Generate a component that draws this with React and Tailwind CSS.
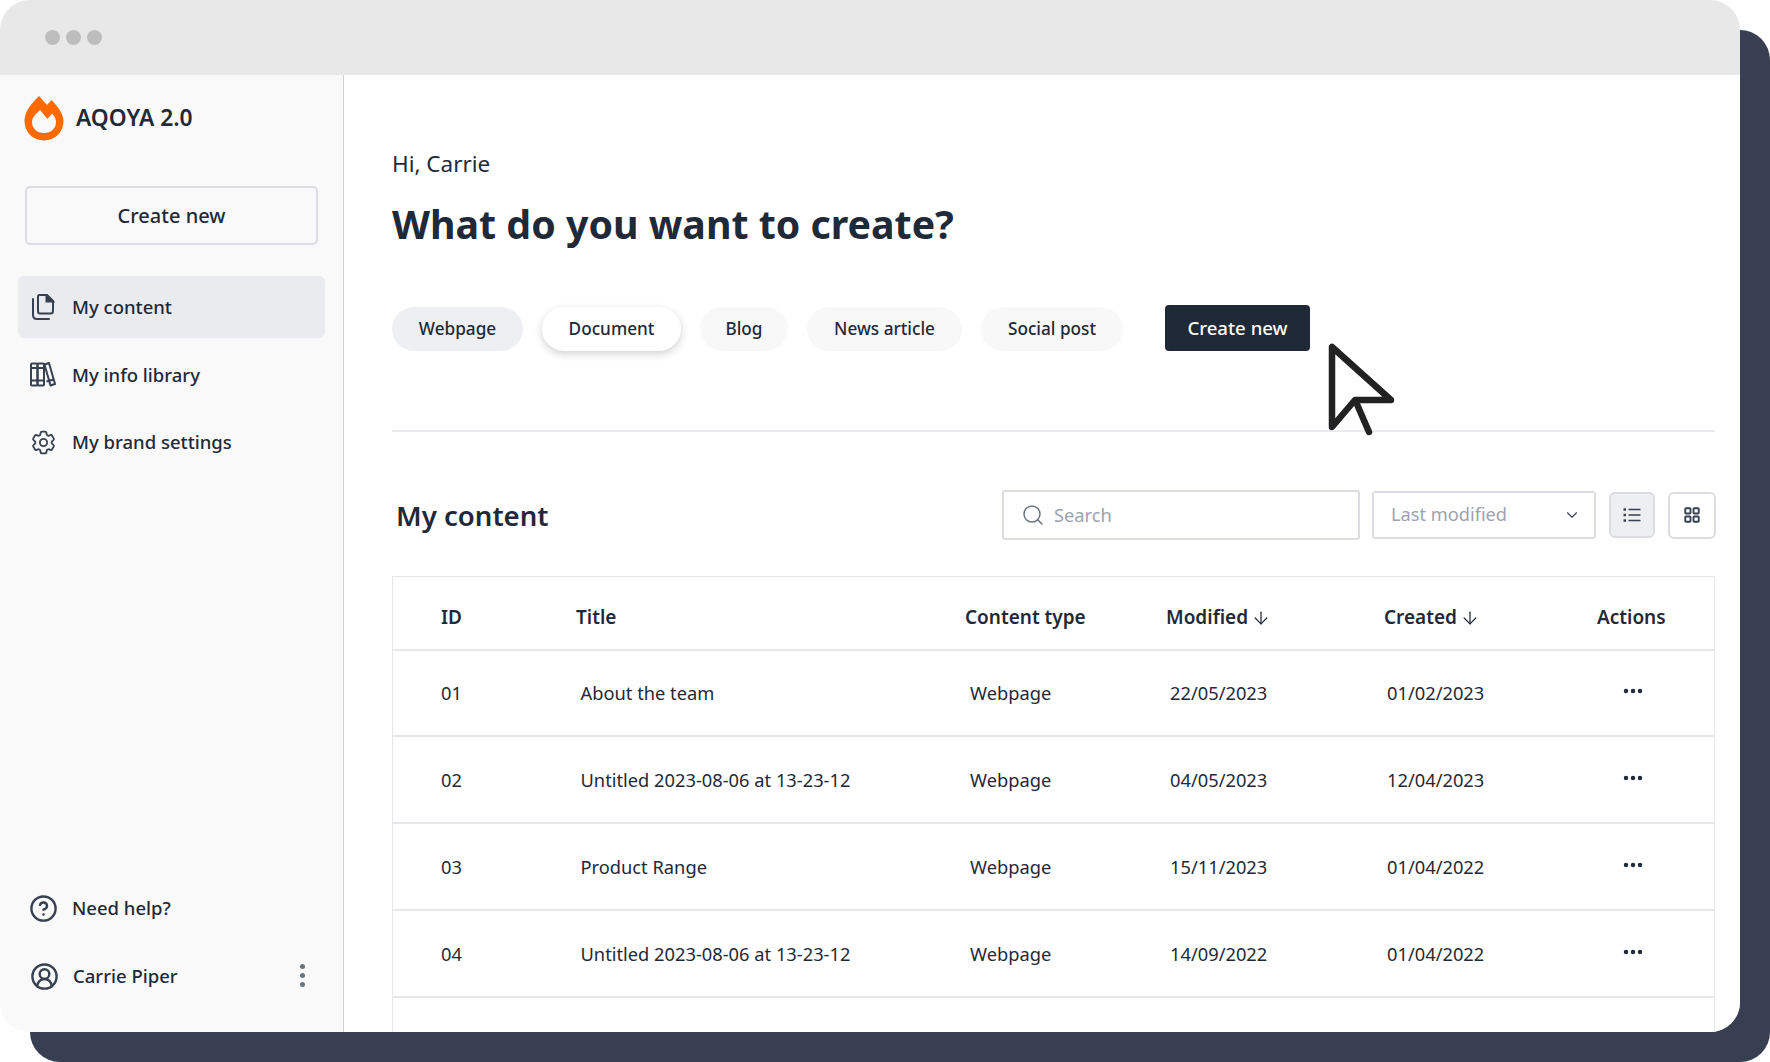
import { ArrowDown, ChevronDown, CircleHelp, CircleUserRound, LayoutGrid, MoreHorizontal, Search } from "lucide-react";
import { HiOutlineCog6Tooth } from "react-icons/hi2";

const rows = [
  { id: "01", title: "About the team", modified: "22/05/2023", created: "01/02/2023" },
  { id: "02", title: "Untitled 2023-08-06 at 13-23-12", modified: "04/05/2023", created: "12/04/2023" },
  { id: "03", title: "Product Range", modified: "15/11/2023", created: "01/04/2022" },
  { id: "04", title: "Untitled 2023-08-06 at 13-23-12", modified: "14/09/2022", created: "01/04/2022" },
];

function Logo() {
  return (
    <svg width="40" height="45" viewBox="0 0 40 45" className="shrink-0">
      <path
        fillRule="evenodd"
        fill="#ff6a00"
        d="M15 0 L23 9 L27.500 4 C33 10 39.500 17 39.500 25 C39.500 36 31 44.500 20 44.500 C9 44.500 0.500 36 0.500 25 C0.500 15 8 7 15 0 Z M16 14 C12 18 8 21 8 26 C8 32.500 13 37 20 37 C27 37 32 32.500 32 26 C32 23 30.500 20 28 17.500 L23.500 23 Z"
      />
    </svg>
  );
}

function CopyIcon() {
  return (
    <svg width="24" height="26" viewBox="0 0 24 26" fill="none" stroke="#374151" strokeWidth="2" className="shrink-0">
      <path d="M7 2.500 C7 1.800 7.500 1 8.500 1 H16 L22 7 V17 C22 18.500 21 19.500 19.500 19.500 H9 C7.800 19.500 7 18.500 7 17 Z" />
      <path d="M15.500 1 L22 7.500 H15.500 Z" fill="#374151" />
      <path d="M2 5 V21 C2 23.500 3.500 25 6 25 H18" strokeLinecap="round" />
    </svg>
  );
}

function LibraryIcon() {
  return (
    <svg width="26" height="25" viewBox="0 0 26 25" fill="none" stroke="#374151" strokeWidth="2" className="shrink-0">
      <rect x="1" y="1.500" width="6.500" height="22" rx="1" />
      <rect x="7.500" y="1.500" width="6.500" height="22" rx="1" />
      <path d="M14.500 2.500 L19 1 L25 22 L20.500 23.500 Z" strokeLinejoin="round" />
      <path d="M1 18.500 H14 M16.500 19.500 L23.500 17.500" />
      <path d="M1 6 H14" />
    </svg>
  );
}

function ListIcon() {
  return (
    <svg width="18" height="18" viewBox="0 0 18 18" fill="none" stroke="#374151" className="shrink-0">
      <path d="M5.500 3.500 H17.500 M5.500 9 H17.500 M5.500 14.500 H17.500" strokeWidth="1.500" />
      <path d="M0.500 3.500 H3 M0.500 9 H3 M0.500 14.500 H3" strokeWidth="2.500" />
    </svg>
  );
}

function NavItem({ icon, label, active }) {
  return (
    <div className={`flex h-[62px] items-center gap-[16px] rounded-md pl-[12px] ${active ? "bg-[#e9ebef]" : ""}`}>
      <div className="flex w-[26px] justify-center">{icon}</div>
      <span className="text-[18.5px] font-medium text-[#1f2937]">{label}</span>
    </div>
  );
}

function Sidebar() {
  return (
    <div className="flex w-[344px] shrink-0 flex-col border-r border-r-[#d0d0d0] bg-[#f9f9f9]">
      <div className="flex items-center gap-[12px] pl-[24px] pt-[21px]">
        <Logo />
        <span className="text-[22.8px] font-semibold text-[#1f2937]">AQOYA 2.0</span>
      </div>
      <button className="mx-[25px] mt-[45px] h-[59px] rounded-[5px] border-2 border-[#dcdde3] text-[20px] font-medium text-[#1f2937]">
        Create new
      </button>
      <div className="mt-[31px] flex flex-col gap-[5.5px] px-[18px]">
        <NavItem active icon={<CopyIcon />} label="My content" />
        <NavItem icon={<LibraryIcon />} label="My info library" />
        <NavItem icon={<HiOutlineCog6Tooth size={29} className="shrink-0 text-[#374151]" />} label="My brand settings" />
      </div>
      <div className="mt-auto flex flex-col gap-[6px] px-[18px] pb-[25px]">
        <NavItem icon={<CircleHelp size={29} strokeWidth={2} className="shrink-0 text-[#374151]" />} label="Need help?" />
        <div className="flex h-[62px] items-center gap-[16px] pl-[13px]">
          <div className="flex w-[26px] justify-center">
            <CircleUserRound size={29} strokeWidth={2} className="shrink-0 text-[#374151]" />
          </div>
          <span className="text-[18.5px] font-medium text-[#1f2937]">Carrie Piper</span>
          <div className="-mt-[2px] ml-auto mr-[20px] flex flex-col gap-[4px]">
            <span className="size-[5px] rounded-full bg-[#6b7280]" />
            <span className="size-[5px] rounded-full bg-[#6b7280]" />
            <span className="size-[5px] rounded-full bg-[#6b7280]" />
          </div>
        </div>
      </div>
    </div>
  );
}

function Pill({ label, className }) {
  return (
    <button className={`h-[44px] rounded-full pb-[1px] text-[17.2px] font-medium text-[#1f2937] ${className}`}>
      {label}
    </button>
  );
}

function ContentTable() {
  return (
    <div className="mt-[36px] border border-[#e5e7eb] text-[18.3px] text-[#1f2937]">
      <div className="grid h-[74px] grid-cols-[135px_389px_201px_218px_213px_1fr] items-center border-b-2 border-[#e5e7eb] pl-[48px] pt-[9px] text-[19px] font-semibold">
        <span>ID</span>
        <span>Title</span>
        <span>Content type</span>
        <span className="flex items-center gap-[3px]">
          Modified <ArrowDown size={20} strokeWidth={1.500} />
        </span>
        <span className="flex items-center gap-[3px]">
          Created <ArrowDown size={20} strokeWidth={1.500} />
        </span>
        <span>Actions</span>
      </div>
      <div className="-mt-[1px]">
        {rows.map((row) => (
          <div
            key={row.id}
            className="grid h-[87px] grid-cols-[139.5px_389.5px_200px_217px_234px_1fr] items-center border-b-2 border-[#e5e7eb] pl-[48px]"
          >
            <span>{row.id}</span>
            <span>{row.title}</span>
            <span>Webpage</span>
            <span>{row.modified}</span>
            <span>{row.created}</span>
            <MoreHorizontal size={24} strokeWidth={2.500} className="-mt-[4px]" />
          </div>
        ))}
      </div>
      <div className="h-[60px]" />
    </div>
  );
}

function Main() {
  return (
    <div className="min-w-0 flex-1 bg-white pl-[48px] pr-[25px] pt-[75px]">
      <p className="text-[22.5px] leading-[28px] text-[#1f2937]">Hi, Carrie</p>
      <h1 className="mt-[19px] text-[39.3px] font-bold leading-[54px] text-[#1f2937]">What do you want to create?</h1>
      <div className="mt-[54px] flex items-end gap-[19px]">
        <Pill label="Webpage" className="w-[131px] bg-[#eeeff2]" />
        <Pill label="Document" className="w-[139px] bg-white shadow-[0_3px_8px_rgba(0,0,0,0.18)]" />
        <Pill label="Blog" className="w-[88px] bg-[#f8f8f8]" />
        <Pill label="News article" className="w-[155px] bg-[#f8f8f8]" />
        <Pill label="Social post" className="w-[142px] bg-[#f8f8f8]" />
        <button className="ml-[23px] h-[46px] w-[145px] rounded-[4px] bg-[#1f2937] text-[18.6px] font-medium text-white">
          Create new
        </button>
      </div>
      <div className="mt-[79px] border-t-2 border-[#e9eaee]" />
      <div className="mt-[58px] flex items-center">
        <h2 className="ml-[4px] mt-[2px] text-[27.6px] font-semibold text-[#1f2937]">My content</h2>
        <div className="ml-auto flex items-center">
          <div className="flex h-[50px] w-[358px] items-center gap-[9px] rounded-[3px] border-2 border-[#dcdde3] pl-[17px] text-[18.3px] text-[#9ca3af]">
            <Search size={24} strokeWidth={1.500} className="text-[#6b7280]" />
            Search
          </div>
          <div className="ml-[12px] flex h-[48px] w-[224px] items-center justify-between rounded-[3px] border-2 border-[#dcdde3] pl-[17px] pr-[13px] text-[18.2px] text-[#9ca3af]">
            Last modified
            <ChevronDown size={18} strokeWidth={1.500} className="text-[#374151]" />
          </div>
          <button className="ml-[13px] flex size-[46px] items-center justify-center rounded-md border-2 border-[#dcdde3] bg-[#eeeff2]">
            <ListIcon />
          </button>
          <button className="-mr-[1px] ml-[13px] flex h-[47px] w-[48px] items-center justify-center rounded-md border-2 border-[#dcdde3] bg-white">
            <LayoutGrid size={18} strokeWidth={2.500} className="text-[#374151]" />
          </button>
        </div>
      </div>
      <ContentTable />
    </div>
  );
}

function Cursor() {
  return (
    <svg
      width="72"
      height="100"
      viewBox="0 0 72 100"
      fill="none"
      stroke="#222222"
      strokeWidth="6.500"
      strokeLinecap="round"
      strokeLinejoin="round"
      className="absolute left-[1327px] top-[342px]"
    >
      <path d="M5 5 V85 L28 58 H64 Z" />
      <path d="M29 60 L42 90" />
    </svg>
  );
}

export default function App() {
  return (
    <div className="relative h-[1062px] w-[1770px] overflow-hidden bg-white font-['Noto_Sans',sans-serif]">
      <div className="absolute bottom-0 left-[30px] right-0 top-[30px] rounded-[30px] bg-[#373f51]" />
      <div className="relative flex h-[1032px] w-[1740px] flex-col overflow-hidden rounded-[30px] bg-white">
        <div className="flex h-[75px] shrink-0 items-center gap-[6px] bg-[#e8e8e8] pl-[45px]">
          <span className="size-[15px] rounded-full bg-[#bdbdbd]" />
          <span className="size-[15px] rounded-full bg-[#bdbdbd]" />
          <span className="size-[15px] rounded-full bg-[#bdbdbd]" />
        </div>
        <div className="flex min-h-0 flex-1">
          <Sidebar />
          <Main />
        </div>
        <Cursor />
      </div>
    </div>
  );
}
